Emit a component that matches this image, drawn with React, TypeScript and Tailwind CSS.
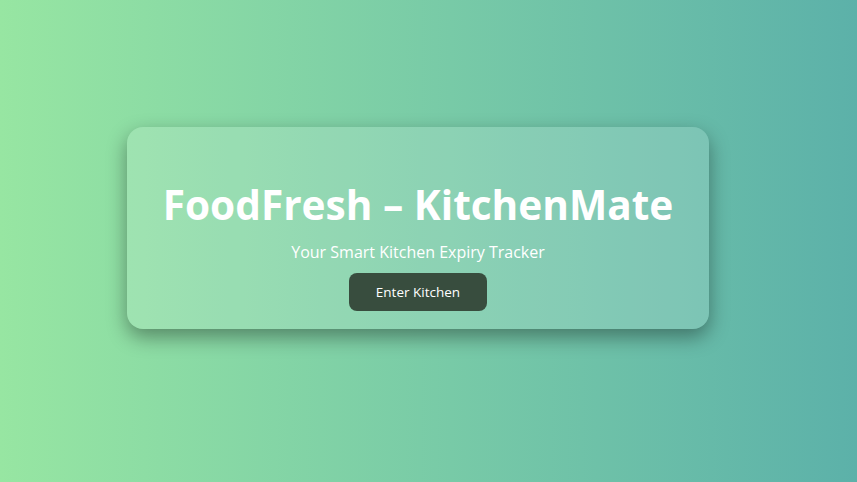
export default function App() {
  return (
    <div
      className="flex h-[482px] w-full items-center justify-center bg-gradient-to-r from-[#97e6a2] to-[#5cb1a9] pr-[21px] pb-[26px]"
      style={{ fontFamily: '"Open Sans", "Noto Sans", sans-serif' }}
    >
      {/* Card */}
      <div className="flex h-[202px] w-[582px] flex-col items-center rounded-2xl bg-white/15 pt-[54px] shadow-[0_8px_20px_rgba(0,0,0,0.38)]">
        <h1 className="text-[40.6px] font-bold leading-[48px] text-white">FoodFresh – KitchenMate</h1>
        <p className="mt-[12px] text-[16px] leading-[22px] text-white">Your Smart Kitchen Expiry Tracker</p>
        <button className="mt-[10px] h-[38px] w-[138px] rounded-lg bg-[#384d3e] text-[13.5px] text-white">
          Enter Kitchen
        </button>
      </div>
    </div>
  );
}
